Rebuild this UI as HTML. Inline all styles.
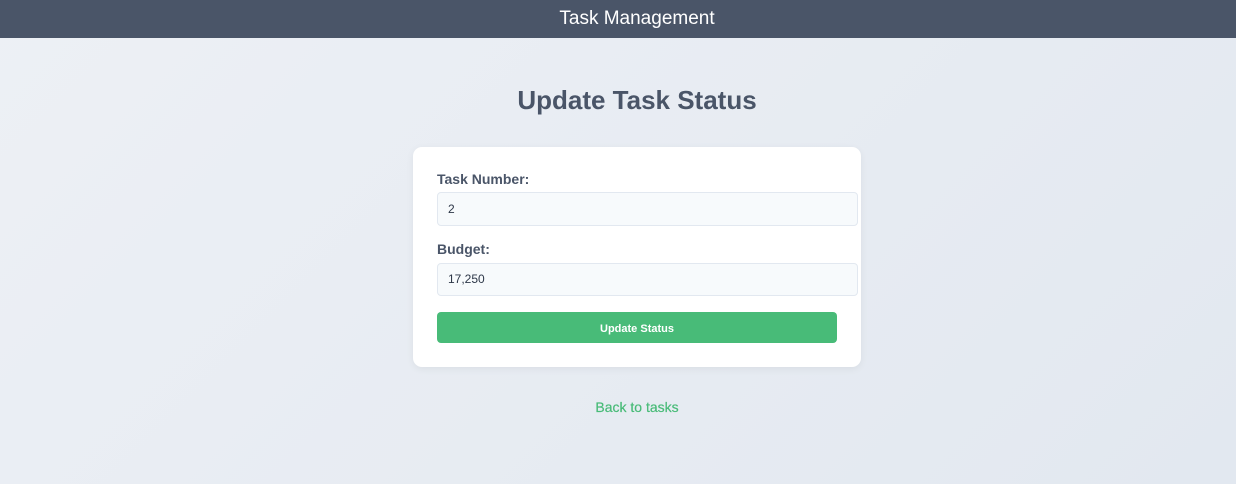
<!DOCTYPE html>
<html><head><meta charset="utf-8"><style>
*{box-sizing:border-box;margin:0;padding:0}
html,body{width:1236px;height:484px;overflow:hidden}
body{font-family:"Liberation Sans",Arial,sans-serif;background:linear-gradient(135deg,#edf0f5,#e2e8f0);position:relative}
.hdr{position:absolute;left:0;top:0;width:1236px;height:38px;background:#4a5568}
.hdr span{position:absolute;left:0;width:1274px;text-align:center;color:#fff;font-size:19px;line-height:37px}
h1{position:absolute;top:85px;left:0;width:1274px;text-align:center;font-size:26px;font-weight:bold;color:#4a5568}
.card{position:absolute;left:413px;top:147px;width:448px;height:220px;background:#fff;border-radius:9px;box-shadow:0 2px 8px rgba(0,0,0,0.06)}
.lbl{position:absolute;left:24px;font-size:14px;font-weight:bold;color:#4a5568}
.inp{position:absolute;left:24px;width:421px;background:#f7fafc;border:1px solid #e2e8f0;border-radius:4px;font-size:12px;color:#2d3748;padding-left:10px}
.btn{position:absolute;left:24px;top:165px;width:400px;height:31px;background:#48bb78;border-radius:4px;color:#fff;font-size:11px;font-weight:bold;text-align:center;line-height:34px}
.back{position:absolute;top:399px;left:0;width:1274px;text-align:center;color:#48bb78;font-size:14px;-webkit-text-stroke:0.2px #48bb78}
</style></head><body>
<div class="hdr"><span>Task Management</span></div>
<h1>Update Task Status</h1>
<div class="card">
<div class="lbl" style="top:24px">Task Number:</div>
<div class="inp" style="top:45px;height:34px;line-height:32px">2</div>
<div class="lbl" style="top:94px">Budget:</div>
<div class="inp" style="top:116px;height:33px;line-height:31px">17,250</div>
<div class="btn">Update Status</div>
</div>
<div class="back">Back to tasks</div>
</body></html>
